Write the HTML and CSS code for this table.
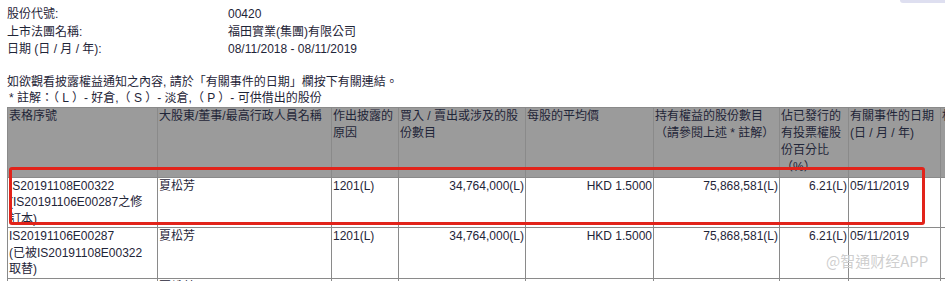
FILE: index.html
```html
<!DOCTYPE html>
<html lang="zh-Hant">
<head>
<meta charset="utf-8">
<title>權益披露</title>
<link rel="stylesheet" href="styles.css">
</head>
<body>
<div class="topbar"></div>
<div class="page">
  <div class="info">
    <div class="label">股份代號:</div><div class="value">00420</div>
    <div class="label">上市法團名稱:</div><div class="value">福田實業(集團)有限公司</div>
    <div class="label">日期 (日 / 月 / 年):</div><div class="value">08/11/2018 - 08/11/2019</div>
  </div>
  <p class="note">如欲觀看披露權益通知之內容, 請於「有關事件的日期」欄按下有關連結。</p>
  <p class="note legend">* 註解：（ L ）- 好倉,（ S ）- 淡倉,（ P ）- 可供借出的股份</p>
  <div class="table-wrap">
    <table class="sdi">
      <colgroup>
        <col class="c1"><col class="c2"><col class="c3"><col class="c4"><col class="c5">
        <col class="c6"><col class="c7"><col class="c8"><col class="c9"><col class="c10">
      </colgroup>
      <thead>
        <tr>
          <th>表格序號</th>
          <th>大股東/董事/最高行政人員名稱</th>
          <th>作出披露的原因</th>
          <th>買入 / 賣出或涉及的股份數目</th>
          <th>每股的平均價</th>
          <th>持有權益的股份數目（請參閱上述 * 註解）</th>
          <th>佔已發行的有投票權股份百分比（%）</th>
          <th>有關事件的日期 (日 / 月 / 年)</th>
          <th>相聯法團的權益</th>
          <th>債權證的權益</th>
        </tr>
      </thead>
      <tbody>
        <tr>
          <td class="serial">IS20191108E00322<br>(IS20191106E00287之修訂本)</td>
          <td>夏松芳</td>
          <td>1201(L)</td>
          <td class="num">34,764,000(L)</td>
          <td class="num">HKD 1.5000</td>
          <td class="num">75,868,581(L)</td>
          <td class="num">6.21(L)</td>
          <td>05/11/2019</td>
          <td></td>
          <td></td>
        </tr>
        <tr>
          <td class="serial">IS20191106E00287<br>(已被IS20191108E00322取替)</td>
          <td>夏松芳</td>
          <td>1201(L)</td>
          <td class="num">34,764,000(L)</td>
          <td class="num">HKD 1.5000</td>
          <td class="num">75,868,581(L)</td>
          <td class="num">6.21(L)</td>
          <td>05/11/2019</td>
          <td></td>
          <td></td>
        </tr>
        <tr>
          <td class="serial">IS20190103E00035</td>
          <td>夏松芳</td>
          <td>1201(L)</td>
          <td class="num">34,764,000(L)</td>
          <td class="num">HKD 1.5000</td>
          <td class="num">75,868,581(L)</td>
          <td class="num">6.21(L)</td>
          <td>05/11/2019</td>
          <td></td>
          <td></td>
        </tr>
      </tbody>
    </table>
    <div class="highlight"></div>
  </div>
</div>
<div class="watermark">@智通财经APP</div>
</body>
</html>
```

FILE: styles.css
```css
html, body {
  margin: 0;
  padding: 0;
  overflow: hidden;
  background: #ffffff;
}
body {
  font-family: "Liberation Sans", Arial, "Noto Sans CJK TC", sans-serif;
  font-size: 12px;
  color: #1f2538;
  position: relative;
  width: 945px;
  height: 281px;
}
.topbar {
  position: absolute;
  top: 0;
  right: 0;
  width: 45px;
  height: 3px;
  background: #dedff0;
  border-bottom-left-radius: 3px;
}
.page {
  padding: 6px 0 0 7px;
}
.info {
  display: grid;
  grid-template-columns: 221px auto;
  line-height: 17.5px;
}
.note {
  margin: 0;
  line-height: 16.5px;
}
.info + .note {
  margin-top: 15px;
}
.legend {
  padding-left: 2px;
}
.table-wrap {
  position: relative;
  width: 1200px;
}
.sdi {
  border-collapse: collapse;
  table-layout: fixed;
  width: 1180px;
}
.c1 { width: 150px; }
.c2 { width: 174px; }
.c3 { width: 67px; }
.c4 { width: 127px; }
.c5 { width: 128px; }
.c6 { width: 126px; }
.c7 { width: 69px; }
.c8 { width: 92px; }
.c9 { width: 120px; }
.c10 { width: 127px; }
.sdi th, .sdi td {
  border: 1px solid #8a8a8a;
  padding: 0 1px;
  vertical-align: top;
  text-align: left;
  font-weight: normal;
}
.sdi th {
  background: #9b9b9b;
  line-height: 17.3px;
}
.sdi td {
  line-height: 16.5px;
}
.sdi td.serial {
  padding-right: 6px;
}
.sdi td.num {
  text-align: right;
}
.highlight {
  position: absolute;
  left: 2px;
  top: 60px;
  width: 916px;
  height: 58px;
  box-sizing: border-box;
  border: 3px solid #e2231a;
  border-radius: 3px;
}
.watermark {
  position: absolute;
  left: 826px;
  top: 252px;
  font-family: "Noto Sans CJK SC", sans-serif;
  font-size: 15px;
  line-height: 18px;
  color: rgba(190, 190, 190, 0.75);
  text-shadow: 0 0 1px #ffffff;
  white-space: nowrap;
}
```
